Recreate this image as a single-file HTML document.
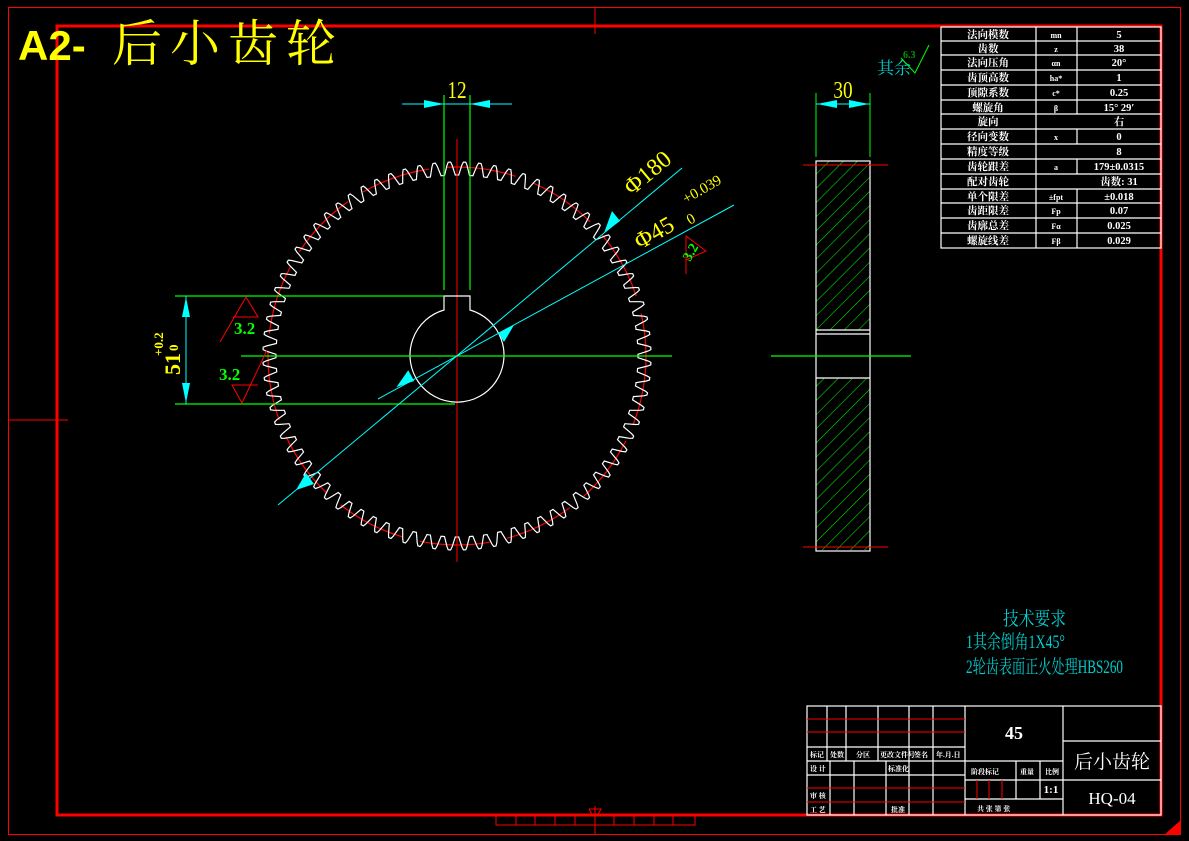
<!DOCTYPE html>
<html><head><meta charset="utf-8"><style>
html,body{margin:0;padding:0;background:#000;width:1189px;height:841px;overflow:hidden}
svg{display:block}
text{font-family:"Liberation Serif","Noto Serif CJK SC","Noto Sans CJK SC",serif}
.w{fill:#fff}
</style></head><body>
<svg id="s" width="1189" height="841" viewBox="0 0 1189 841" xmlns="http://www.w3.org/2000/svg">
<rect width="1189" height="841" fill="#000"/>
<rect x="8.5" y="7.5" width="1172" height="827" fill="none" stroke="#f00" stroke-width="1"/>
<rect x="57" y="26" width="1104" height="789" fill="none" stroke="#f00" stroke-width="3"/>
<line x1="8" y1="420" x2="68" y2="420" stroke="#f00"/>
<line x1="595" y1="7" x2="595" y2="34" stroke="#f00"/>
<line x1="595" y1="806" x2="595" y2="835" stroke="#f00"/>
<polyline points="496,816 496,825 695,825 695,816" fill="none" stroke="#f00"/>
<g stroke="#f00"><line x1="516" y1="816" x2="516" y2="825"/><line x1="535" y1="816" x2="535" y2="825"/><line x1="555" y1="816" x2="555" y2="825"/><line x1="575" y1="816" x2="575" y2="825"/><line x1="614" y1="816" x2="614" y2="825"/><line x1="634" y1="816" x2="634" y2="825"/><line x1="654" y1="816" x2="654" y2="825"/><line x1="673" y1="816" x2="673" y2="825"/></g>
<polyline points="589,809 601,809 597,816 593,816 589,809" fill="none" stroke="#f00"/>
<polygon points="1181,820 1181,835 1164,835" fill="#f00"/>

<text x="18" y="60" fill="#ff0" font-weight="bold" font-size="42" style="font-family:'Liberation Sans',sans-serif">A2-</text>
<text x="112" y="61" fill="#ff0" font-size="50" letter-spacing="8" style="font-family:'Noto Serif CJK SC',serif">后小齿轮</text>

<circle cx="457" cy="356" r="189" fill="none" stroke="#f00" stroke-width="1.2" stroke-dasharray="70,18"/>
<path id="gear" fill="none" stroke="#fff" stroke-width="1.2" d=""/>
<line x1="457" y1="139" x2="457" y2="562" stroke="#f00"/>
<path d="M444,296 L444,310 A47,47 0 1 0 470,310 L470,296 Z" fill="none" stroke="#fff" stroke-width="1.2"/>
<g stroke="#0f0" stroke-width="1.2">
<line x1="241" y1="356" x2="672" y2="356"/>
<line x1="175" y1="296" x2="444" y2="296"/>
<line x1="175" y1="404" x2="455" y2="404"/>
<line x1="444" y1="95" x2="444" y2="290"/>
<line x1="470" y1="95" x2="470" y2="290"/>
</g>
<line x1="402" y1="104" x2="512" y2="104" stroke="#0ff"/>
<polygon points="444,104 424,100 424,108" fill="#0ff"/>
<polygon points="470,104 490,100 490,108" fill="#0ff"/>
<text x="457" y="98" fill="#ff0" font-size="24" text-anchor="middle" transform="translate(457,98) scale(0.8,1) translate(-457,-98)">12</text>
<line x1="186" y1="296" x2="186" y2="404" stroke="#0ff"/>
<polygon points="186,297 182,317 190,317" fill="#0ff"/>
<polygon points="186,403 182,383 190,383" fill="#0ff"/>
<text transform="translate(180,375) rotate(-90)" fill="#ff0" font-size="22" font-weight="bold">51<tspan font-size="13" dx="2" dy="-2">0</tspan></text>
<text transform="translate(163,356) rotate(-90)" fill="#ff0" font-size="13" font-weight="bold">+0.2</text>
<g stroke="#f00" fill="none">
<polyline points="220,342 246,297 258,317 233,317"/>
<polyline points="267,350 242,403 232,385 258,385" />
</g>
<text x="234" y="334" fill="#0f0" font-size="17" font-weight="bold">3.2</text>
<text x="219" y="380" fill="#0f0" font-size="17" font-weight="bold">3.2</text>
<line x1="278" y1="505" x2="682" y2="168" stroke="#0ff"/>
<polygon points="296,490 306,473 314,484" fill="#0ff"/>
<polygon points="604,233 620,221 612,211" fill="#0ff"/>
<line x1="378" y1="399" x2="734" y2="205" stroke="#0ff"/>
<polygon points="397,388 414,380 407,370" fill="#0ff" transform="rotate(6,405,382)"/>
<polygon points="514,325 498,333 504,342" fill="#0ff"/>
<text transform="translate(632,196) rotate(-40)" fill="#ff0" font-size="24">Φ180</text>
<text transform="translate(640,250) rotate(-30)" fill="#ff0" font-size="24">Φ45</text>
<text transform="translate(686,204) rotate(-30)" fill="#ff0" font-size="15">+0.039</text>
<text transform="translate(690,225) rotate(-30)" fill="#ff0" font-size="15">0</text>
<polyline points="686,274 686,236 706,251 686,260" fill="none" stroke="#f00"/>
<text transform="translate(690,262) rotate(-60)" fill="#0f0" font-size="14" font-weight="bold">3.2</text>

<defs><pattern id="h" width="10" height="10" patternUnits="userSpaceOnUse" patternTransform="rotate(45)"><line x1="0" y1="0" x2="0" y2="10" stroke="#0e0" stroke-width="1.1"/></pattern></defs>
<rect x="816" y="161" width="54" height="169" fill="url(#h)"/>
<rect x="816" y="378" width="54" height="172" fill="url(#h)"/>
<rect x="816" y="161" width="54" height="390" fill="none" stroke="#fff" stroke-width="1.2"/>
<g stroke="#fff" stroke-width="1.2"><line x1="816" y1="330" x2="870" y2="330"/><line x1="816" y1="334" x2="870" y2="334"/><line x1="816" y1="378" x2="870" y2="378"/></g>
<line x1="771" y1="356" x2="911" y2="356" stroke="#0f0" stroke-width="1.2"/>
<line x1="803" y1="165" x2="888" y2="165" stroke="#f00"/>
<line x1="803" y1="547" x2="888" y2="547" stroke="#f00"/>
<line x1="816" y1="93" x2="816" y2="157" stroke="#0f0"/>
<line x1="870" y1="93" x2="870" y2="157" stroke="#0f0"/>
<line x1="816" y1="104" x2="870" y2="104" stroke="#0ff"/>
<polygon points="817,104 837,100 837,108" fill="#0ff"/>
<polygon points="869,104 849,100 849,108" fill="#0ff"/>
<text x="843" y="98" fill="#ff0" font-size="24" text-anchor="middle" transform="translate(843,98) scale(0.8,1) translate(-843,-98)">30</text>
<text x="877" y="74" fill="#0cc" font-size="17">其余</text>
<text x="903" y="58" fill="#090" font-size="10" font-weight="bold">6.3</text>
<polyline points="901,58 915,73 929,45" fill="none" stroke="#0f0"/>

<g id="tbl" stroke="#fff" stroke-width="1.2" fill="none"></g>
<g id="tbt" class="w" font-size="10.5" font-weight="bold" text-anchor="middle"></g>

<text x="1003" y="625" fill="#0cc" font-size="19" textLength="63" lengthAdjust="spacingAndGlyphs">技术要求</text>
<text x="966" y="648" fill="#0cc" font-size="19" textLength="99" lengthAdjust="spacingAndGlyphs">1其余倒角1X45°</text>
<text x="966" y="673" fill="#0cc" font-size="19" textLength="157" lengthAdjust="spacingAndGlyphs">2轮齿表面正火处理HBS260</text>

<g stroke="#fff" stroke-width="1.2" fill="none">
<rect x="807" y="706" width="354" height="109"/>
<line x1="807" y1="747" x2="965" y2="747"/>
<line x1="807" y1="761" x2="965" y2="761"/>
<line x1="807" y1="775" x2="965" y2="775"/>
<line x1="827" y1="706" x2="827" y2="761"/>
<line x1="846" y1="706" x2="846" y2="761"/>
<line x1="878" y1="706" x2="878" y2="761"/>
<line x1="909" y1="706" x2="909" y2="815"/>
<line x1="933" y1="706" x2="933" y2="815"/>
<line x1="830" y1="761" x2="830" y2="815"/>
<line x1="854" y1="761" x2="854" y2="815"/>
<line x1="886" y1="761" x2="886" y2="815"/>
<line x1="965" y1="706" x2="965" y2="815"/>
<line x1="1063" y1="706" x2="1063" y2="815"/>
<line x1="1063" y1="741" x2="1161" y2="741"/>
<line x1="1063" y1="780" x2="1161" y2="780"/>
<line x1="965" y1="761" x2="1063" y2="761"/>
<line x1="965" y1="780" x2="1063" y2="780"/>
<line x1="965" y1="799" x2="1063" y2="799"/>
<line x1="1016" y1="761" x2="1016" y2="799"/>
<line x1="1040" y1="761" x2="1040" y2="799"/>
</g>
<g stroke="#f00">
<line x1="807" y1="719" x2="965" y2="719"/><line x1="807" y1="732" x2="965" y2="732"/>
<line x1="807" y1="788" x2="965" y2="788"/><line x1="807" y1="802" x2="965" y2="802"/>
<line x1="977" y1="780" x2="977" y2="799"/><line x1="989" y1="780" x2="989" y2="799"/><line x1="1002" y1="780" x2="1002" y2="799"/>
</g>
<g class="w" font-size="7" font-weight="bold">
<text x="810" y="757">标记</text><text x="830" y="757">处数</text><text x="856" y="757">分区</text><text x="880" y="757">更改文件号</text><text x="914" y="757">签名</text><text x="936" y="757">年.月.日</text>
<text x="810" y="771">设 计</text><text x="888" y="771">标准化</text>
<text x="810" y="798">审 核</text><text x="810" y="812">工 艺</text><text x="891" y="812">批准</text>
<text x="971" y="774">阶段标记</text><text x="1020" y="774">重量</text><text x="1045" y="774">比例</text>
<text x="977" y="811">共    张    第    张</text>
</g>
<text x="1014" y="739" class="w" font-size="18" text-anchor="middle" font-weight="bold">45</text>
<text x="1051" y="793" class="w" font-size="11" text-anchor="middle" font-weight="bold">1:1</text>
<text x="1112" y="768" class="w" font-size="19" text-anchor="middle">后小齿轮</text>
<text x="1112" y="804" class="w" font-size="17" text-anchor="middle">HQ-04</text>
</svg>
<script>
(function(){
var cx=457,cy=356,N=80,ra=194,rf=181,d='';
for(var i=0;i<N;i++){
 var a0=2*Math.PI*i/N, s=2*Math.PI/N;
 var pts=[[rf,0],[rf,0.12],[ra-3,0.33],[ra,0.42],[ra,0.58],[ra-3,0.67],[rf,0.88]];
 for(var j=0;j<pts.length;j++){
  var a=a0+pts[j][1]*s-Math.PI/2, r=pts[j][0];
  d+=(i==0&&j==0?'M':'L')+(cx+r*Math.cos(a)).toFixed(1)+','+(cy+r*Math.sin(a)).toFixed(1);
 }
}
document.getElementById('gear').setAttribute('d',d+'Z');
var ys=[27,41,55,70,85,100,114,129,144,159,174,189,203,218,233,248];
var rows=[["法向模数","mn","5"],["齿数","z","38"],["法向压角","αn","20°"],["齿顶高数","ha*","1"],["顶隙系数","c*","0.25"],["螺旋角","β","15° 29′"],["旋向","","右"],["径向变数","x","0"],["精度等级","","8"],["齿轮跟差","a","179±0.0315"],["配对齿轮","","齿数: 31"],["单个限差","±fpt","±0.018"],["齿距限差","Fp","0.07"],["齿廓总差","Fα","0.025"],["螺旋线差","Fβ","0.029"]];
var g=document.getElementById('tbl'),t=document.getElementById('tbt'),h='';
h+='<rect x="941" y="27" width="220" height="221"/><line x1="1036" y1="27" x2="1036" y2="248"/>';
for(var k=1;k<ys.length-1;k++) h+='<line x1="941" y1="'+ys[k]+'" x2="1161" y2="'+ys[k]+'"/>';
for(var k=0;k<rows.length;k++){ if(rows[k][1]!=='') h+='<line x1="1077" y1="'+ys[k]+'" x2="1077" y2="'+ys[k+1]+'"/>';}
g.innerHTML=h;
var tt='';
for(var k=0;k<rows.length;k++){
 var y=ys[k]+11;
 tt+='<text x="988" y="'+y+'">'+rows[k][0]+'</text>';
 if(rows[k][1]!==''){tt+='<text x="1056" y="'+y+'" font-size="8">'+rows[k][1]+'</text><text x="1119" y="'+y+'">'+rows[k][2]+'</text>';}
 else tt+='<text x="1119" y="'+y+'">'+rows[k][2]+'</text>';
}
t.innerHTML=tt;
})();
</script>
</body></html>
